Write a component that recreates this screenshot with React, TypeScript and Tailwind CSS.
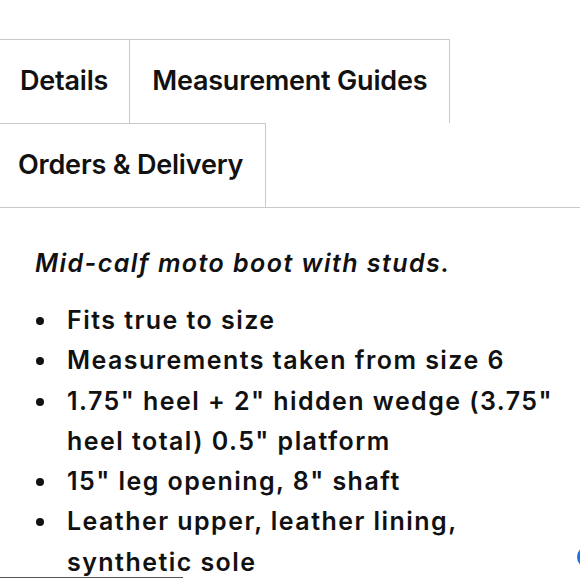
import React from 'react';

const bullets = [
  'Fits true to size',
  'Measurements taken from size 6',
  '1.75" heel + 2" hidden wedge (3.75" heel total) 0.5" platform',
  '15" leg opening, 8" shaft',
  'Leather upper, leather lining, synthetic sole',
];

export default function App() {
  return (
    <div className="relative w-[580px] h-[580px] overflow-hidden bg-white text-[#111] font-['Inter',sans-serif]">
      <div className="pt-[39px]">
        {/* tab list */}
        <div className="border-b border-[#c9c9c9]">
          <div className="flex">
            <button className="relative z-10 -mb-px h-[84px] pl-[20px] pr-[21px] bg-white border-t border-[#c9c9c9] text-[27px] font-semibold tracking-[-0.2px]">
              Details
            </button>
            <button className="h-[84px] px-[22px] border border-b-0 border-[#c9c9c9] text-[27px] font-semibold tracking-[-0.2px]">
              Measurement Guides
            </button>
          </div>
          <div className="flex">
            <button className="h-[84px] pl-[18px] pr-[22px] border-t border-r border-[#c9c9c9] text-[27px] font-semibold tracking-[-0.2px]">
              Orders &amp; Delivery
            </button>
          </div>
        </div>

        {/* panel */}
        <div className="pt-[35px] pl-[35px] pr-[15px]">
          <p className="text-[25px] leading-[40px] italic font-semibold tracking-[1.45px]">Mid-calf moto boot with studs.</p>
          <ul className="mt-[17px] text-[25px] leading-[40.3px] font-semibold tracking-[1.45px]">
            {bullets.map((b) => (
              <li key={b} className="flex">
                <span className="w-[32px] shrink-0 flex pt-[17px]">
                  <span className="ml-[1px] w-[8px] h-[8px] rounded-full bg-[#111]" />
                </span>
                <span>{b}</span>
              </li>
            ))}
          </ul>
        </div>
      </div>

      <div className="absolute left-0 top-[577px] w-[183px] h-px bg-[#555]" />
      <div className="absolute left-[577px] top-[546px] w-[22px] h-[22px] rounded-full bg-[#1f6fe5]" />
    </div>
  );
}
